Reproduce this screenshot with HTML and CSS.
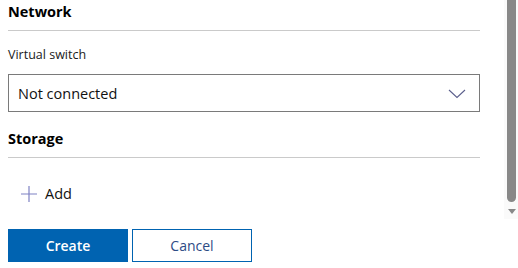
FILE: index.html
```html
<!DOCTYPE html>
<html>
<head>
<meta charset="utf-8">
<link rel="stylesheet" href="styles.css">
</head>
<body>
<div class="panel">
  <section class="group">
    <h2 class="heading">Network</h2>
    <div class="field">
      <label class="label">Virtual switch</label>
      <div class="select">
        <span class="select-value">Not connected</span>
        <svg class="chevron" width="18" height="10" viewBox="0 0 18 10"><path d="M1 1 L9 8.5 L17 1" fill="none" stroke="#5b5f8c" stroke-width="1.1"/></svg>
      </div>
    </div>
  </section>
  <section class="group">
    <h2 class="heading">Storage</h2>
    <button class="add"><svg class="plus" width="16" height="16" viewBox="0 0 16 16"><path d="M8 0 V16 M0 8 H16" stroke="#7f82c4" stroke-width="1.2"/></svg><span>Add</span></button>
  </section>
  <div class="actions">
    <button class="btn primary">Create</button>
    <button class="btn secondary">Cancel</button>
  </div>
</div>
<div class="scrollbar">
  <div class="thumb"></div>
  <div class="arrow"></div>
</div>
</body>
</html>
```
FILE: styles.css
```css
html, body {
  margin: 0;
  padding: 0;
  background: #fff;
}
body {
  font-family: "Segoe UI", "Open Sans", "Liberation Sans", sans-serif;
  color: #000;
  width: 518px;
  height: 268px;
  overflow: hidden;
  position: relative;
}
.panel {
  width: 472px;
  padding: 0 0 0 8px;
}
.heading {
  margin: 0;
  font-size: 14.5px;
  font-weight: 700;
  line-height: 20px;
  padding-top: 2px;
  padding-bottom: 8px;
  border-bottom: 1px solid #cacaca;
}
.field {
  padding-top: 15px;
}
.label {
  display: block;
  font-size: 12.5px;
  line-height: 18px;
  color: #1a1a1a;
  margin-bottom: 10px;
}
.select {
  height: 36px;
  border: 1px solid #7a7a7a;
  display: flex;
  align-items: center;
  justify-content: space-between;
  padding: 0 13px 0 9px;
}
.select-value {
  font-size: 14.5px;
  color: #111;
}
.chevron {
  display: block;
  margin-top: 2px;
}
.group + .group {
  margin-top: 15px;
}
.add {
  display: flex;
  align-items: center;
  gap: 8px;
  background: none;
  border: none;
  padding: 0 0 0 13px;
  margin-top: 26px;
  font-family: inherit;
  font-size: 14.5px;
  color: #111;
  line-height: 20px;
}
.plus {
  display: block;
}
.actions {
  display: flex;
  gap: 4px;
  margin-top: 25px;
}
.btn {
  width: 120px;
  height: 33px;
  font-family: inherit;
  font-size: 14px;
  font-weight: 600;
  border: 1px solid #0063b1;
  padding: 0;
}
.primary {
  background: #0063b1;
  color: #fff;
}
.secondary {
  background: #fff;
  color: #2d4b85;
  font-weight: 400;
}
.scrollbar {
  position: absolute;
  top: 0;
  right: 0;
  width: 14px;
  height: 219px;
  background: #fafafa;
}
.thumb {
  position: absolute;
  left: 3px;
  top: 0;
  width: 9px;
  height: 202px;
  background: #888;
  border-radius: 0 0 5px 5px;
}
.arrow {
  position: absolute;
  left: 4px;
  top: 209px;
  width: 0;
  height: 0;
  border-left: 4px solid transparent;
  border-right: 4px solid transparent;
  border-top: 5px solid #888;
}
```
